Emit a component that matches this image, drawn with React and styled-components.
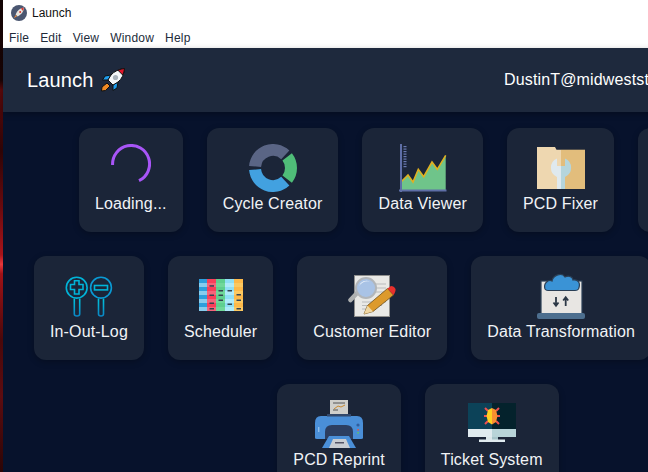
import styled, { createGlobalStyle } from 'styled-components'

const GlobalStyle = createGlobalStyle`
    html, body {
        margin: 0;
        padding: 0;
        width: 648px;
        height: 472px;
        overflow: hidden;
        background: #07122c;
        font-family: "Liberation Sans", Arial, sans-serif;
    }
`

const Screen = styled.div`
    display: flex;
    width: 648px;
    height: 472px;
    overflow: hidden;
`

const DesktopStrip = styled.div`
    flex: 0 0 3px;
    background: linear-gradient(
        180deg,
        #120304 0%,
        #1a0405 17%,
        #5c090c 19%,
        #2e0406 32%,
        #6a0a0e 44%,
        #a8141a 54%,
        #e8383c 56%,
        #a01217 58%,
        #4a080a 72%,
        #5c0c10 84%,
        #2c0506 100%
    );
`

const Window = styled.div`
    flex: 0 0 830px;
    display: flex;
    flex-direction: column;
    height: 472px;
`

const TitleBar = styled.div`
    height: 30px;
    background: #fff;
    display: flex;
    align-items: center;
    gap: 5px;
    padding: 0 0 4px 8px;
    box-sizing: border-box;
    font-size: 12px;
    color: #111;
`

const MenuBar = styled.div`
    height: 18px;
    background: #fff;
    display: flex;
    gap: 11px;
    padding-left: 6px;
    font-size: 12px;
    line-height: 16px;
    letter-spacing: 0.2px;
    color: #222b3a;
`

const Header = styled.header`
    height: 64px;
    flex-shrink: 0;
    background: #1e293d;
    display: flex;
    align-items: center;
    justify-content: space-between;
    padding: 0 24px;
    box-shadow: 0 2px 6px rgba(0, 0, 0, 0.3);
    position: relative;
    color: #fff;
`

const Brand = styled.h1`
    margin: 0;
    display: flex;
    align-items: center;
    gap: 7px;
    font-size: 20px;
    font-weight: 400;
    letter-spacing: 0.15px;
`

const UserName = styled.div`
    width: 305px;
    font-size: 16px;
    letter-spacing: 0.15px;
    white-space: nowrap;
`

const AppGrid = styled.main`
    flex: 1;
    background: #07122c;
    display: flex;
    flex-wrap: wrap;
    justify-content: center;
    align-content: flex-start;
    gap: 24px;
    padding: 16px 24px 0;
    overflow: hidden;
`

const Card = styled.div`
    box-sizing: border-box;
    height: 104px;
    width: ${props => props.$width || 'auto'};
    padding: 16px;
    background: #1b2538;
    border-radius: 12px;
    box-shadow: 0 2px 6px rgba(0, 0, 0, 0.25);
    display: flex;
    flex-direction: column;
    align-items: center;
`

const IconBox = styled.div`
    height: 48px;
    display: flex;
    justify-content: center;
    align-items: flex-start;
`

const Label = styled.div`
    font-size: 16px;
    line-height: 24px;
    letter-spacing: 0.15px;
    color: #f1f3f6;
    white-space: nowrap;
`

function RocketIcon() {
    return (
        <svg width="24" height="24" viewBox="0 0 24 24" stroke="#111" strokeWidth="1">
            <path d="M6 15 L1 19 L0.5 23 L4.5 22.5 L9 18 Z" fill="#f08a24" />
            <path d="M10 7 L4 8 L1.5 12 L7 12 Z" fill="#1e9bea" />
            <path d="M17 14 L16 20 L12 22.5 L12 17 Z" fill="#1e9bea" />
            <path d="M23.5 0.5 C18 1 13 3.5 10 7 L7 12 L12 17 L17 14 C21 11 23 6 23.5 0.5 Z" fill="#f4f6f8" />
            <path d="M23.5 0.5 C21 0.7 19 1.3 17 2.3 L21.7 7 C22.7 5 23.3 3 23.5 0.5 Z" fill="#e0162b" />
            <circle cx="14.5" cy="9.5" r="2.6" fill="#a9b2bb" stroke="none" />
        </svg>
    )
}

function AppLogo() {
    return (
        <svg width="16" height="16" viewBox="0 0 16 16">
            <circle cx="8" cy="8" r="8" fill="#4a5670" />
            <path d="M12.8 2.6 C9 3.2 6.2 5.8 4.6 9.4 L6.6 11.4 C10.2 9.8 12.8 7 12.8 2.6 Z" fill="#e9e4dc" />
            <path d="M12.8 2.6 L9.8 3.6 L12 6 Z" fill="#d8352f" />
            <path d="M4.8 10 L2.8 13.2 L6 11.2 Z" fill="#ef8a3a" />
            <circle cx="9.2" cy="7" r="1" fill="#d8352f" />
        </svg>
    )
}

function SpinnerIcon() {
    return (
        <svg width="40" height="40" viewBox="0 0 40 40">
            <path d="M1.6 21 A18.5 18.5 0 1 1 28 36.7" fill="none" stroke="#a855f7" strokeWidth="3" />
        </svg>
    )
}

function CycleIcon() {
    return (
        <svg width="48" height="48" viewBox="0 0 48 48" fill="none" strokeWidth="12">
            <path d="M6.07 22.43 A18 18 0 0 1 36.28 10.84" stroke="#5a6585" />
            <path d="M38.18 12.92 A18 18 0 0 1 38.18 35.08" stroke="#4fbd78" />
            <path d="M36.28 37.16 A18 18 0 0 1 6.07 25.57" stroke="#42a1e0" />
        </svg>
    )
}

function ChartIcon() {
    const ticks = [2, 4.5, 7, 9.5, 12, 14.5, 17, 19.5, 22]
    return (
        <svg width="48" height="48" viewBox="0 0 48 48">
            <path d="M2 37.3 L9 31 L14 38 L19.3 25.3 L24.7 32.7 L33 18 L38.3 25.3 L46.7 11.3 L46.7 46 L2 46 Z" fill="#6fc48a" />
            <path d="M2 38 L9 31 L14 38 L19.3 25.3 L24.7 32.7 L33 18 L38.3 25.3 L46.7 11.3" fill="none" stroke="#e0b020" strokeWidth="1.6" />
            <rect x="1" y="0" width="2" height="48" fill="#5e6ea6" />
            <rect x="0" y="45.5" width="47.5" height="2" fill="#5e6ea6" />
            {ticks.map(y => (
                <rect key={y} x="4.5" y={y} width="3" height="1.2" fill="#6a7ab0" />
            ))}
        </svg>
    )
}

function FolderIcon() {
    return (
        <svg width="48" height="48" viewBox="0 0 48 48">
            <path d="M0 3 L18 3 L19.5 5.7 L24 5.7 L24 45 L0 45 Z" fill="#eed7b0" />
            <rect x="24" y="5.7" width="24" height="39.3" fill="#e2bd7c" />
            <path d="M20 14.6 L20 22 L24 22 L24 45 L20 45 L20 33 A10 10 0 0 1 20 14.6 Z" fill="#dfe9ee" />
            <path d="M28 14.6 L28 22 L24 22 L24 45 L28 45 L28 33 A10 10 0 0 0 28 14.6 Z" fill="#b5d5dc" />
        </svg>
    )
}

function InOutIcon() {
    return (
        <svg width="48" height="48" viewBox="0 0 48 48" fill="none" strokeWidth="1.6">
            <defs>
                <linearGradient id="logGrad" x1="0" y1="0" x2="0" y2="1">
                    <stop offset="0" stopColor="#00c4dc" />
                    <stop offset="1" stopColor="#0a86c4" />
                </linearGradient>
            </defs>
            <g stroke="#00b4d8">
                <circle cx="11.7" cy="15.7" r="10.4" />
                <circle cx="36" cy="15.7" r="10.4" stroke="#0a9ad4" />
                <path d="M9.5 12.5 L9.5 8.7 L14 8.7 L14 12.5 L18 12.5 L18 17.5 L14 17.5 L14 22 L9.5 22 L9.5 17.5 L5.5 17.5 L5.5 12.5 Z" />
                <rect x="29.5" y="13.5" width="13" height="4.4" />
            </g>
            <g stroke="url(#logGrad)">
                <path d="M9.3 26.5 L9.3 42 Q9.3 44 12 44 Q14.7 44 14.7 42 L14.7 26.5" />
                <path d="M33.5 26.5 L33.5 42 Q33.5 44 36 44 Q38.5 44 38.5 42 L38.5 26.5" />
            </g>
        </svg>
    )
}

const scheduleColumns = [
    { light: '#2f9fdc', dark: '#87cdee', dashes: [] },
    { light: '#f8405a', dark: '#f6647a', dashes: [6.2, 15.5, 23.5, 29] },
    { light: '#5fcf8f', dark: '#70d89a', dashes: [11, 15.5, 20.5] },
    { light: '#8fdff5', dark: '#aeeafa', dashes: [11, 24.5] },
    { light: '#fdb94a', dark: '#fcc860', dashes: [15, 20.5, 29] },
]
const scheduleRows = [0, 1, 2, 3, 4, 5, 6, 7]

function ScheduleIcon() {
    return (
        <svg width="48" height="48" viewBox="0 0 48 48">
            <g transform="translate(2 7)">
                {scheduleColumns.map((col, c) => (
                    <g key={c}>
                        {scheduleRows.map(r => (
                            <rect key={r} x={c === 0 ? 0 : 8 + (c - 1) * 9} y={r * 4} width={c === 0 ? 8 : 9} height="4" fill={r % 2 ? col.dark : col.light} />
                        ))}
                        {col.dashes.map(y => (
                            <rect key={y} x={c === 0 ? 1 : 10.5 + (c - 1) * 9} y={y} width="4.5" height="1.5" fill="#35424f" />
                        ))}
                    </g>
                ))}
            </g>
        </svg>
    )
}

function EditorIcon() {
    return (
        <svg width="48" height="48" viewBox="0 0 48 48">
            <rect x="6.5" y="3.5" width="35" height="41" fill="#e9e9e6" stroke="#8f8f8d" />
            <path d="M24 12 H38 M26 16 H38 M26 20 H38 M14 30 H38 M14 33.5 H34 M14 37 H28" stroke="#b9bbbc" strokeWidth="1.2" />
            <path d="M10 20 L2.5 28" stroke="#aeb0b0" strokeWidth="4.5" strokeLinecap="round" />
            <circle cx="18" cy="16" r="10" fill="#a9c3e6" stroke="#b2b6ba" strokeWidth="2" />
            <path d="M11 14 A8 8 0 0 1 22 9.5 A11 11 0 0 0 11 14 Z" fill="#eef4fb" />
            <path d="M16 42 L19.5 33.5 L39.5 16.5 L45.5 23 L25 39.5 Z" fill="#dd9a2c" stroke="#6e4f1a" strokeWidth="0.8" />
            <path d="M16 42 L19.5 33.5 L25 39.5 Z" fill="#efd7a4" />
            <path d="M39.5 16.5 L43 14 Q46 14 47.5 17 Q48 19 45.5 23 Z" fill="#e8302c" />
        </svg>
    )
}

function CloudIcon() {
    return (
        <svg width="48" height="48" viewBox="0 0 48 48">
            <rect x="4" y="9" width="41" height="33" fill="#e8e6e3" stroke="#2b3f55" strokeWidth="1.2" />
            <rect x="0" y="41" width="48" height="6" rx="2" fill="#4d6f8f" />
            <path d="M8 17 C6 11 12 7 15 9 C16 3 25 0 28 5 C32 3 36 5 36 8 C41 7 44 11 41.5 17 Q40.5 18.5 38 18.5 L11 18.5 Q9 18.5 8 17 Z" fill="#3a93d6" stroke="#2b3f55" strokeWidth="1.2" />
            <path d="M19 25 V33 M16.5 30.5 L19 33.8 L21.5 30.5 M28.7 34 V26 M26.2 28.5 L28.7 25.2 L31.2 28.5" fill="none" stroke="#2c3846" strokeWidth="1.8" />
        </svg>
    )
}

function PrinterIcon() {
    return (
        <svg width="48" height="48" viewBox="0 0 48 48">
            <rect x="15" y="0" width="18" height="14" fill="#cfcfcb" />
            <path d="M18 3 H30 M18 10 H23" stroke="#555" strokeWidth="1" />
            <path d="M19 9 L23 6 L26 7 L30 5" stroke="#c98a30" strokeWidth="1" fill="none" />
            <path d="M0 23 Q0 16 6 16 L42 16 Q48 16 48 23 L48 38 Q48 39 46 39 L2 39 Q0 39 0 38 Z" fill="#4a8fd8" />
            <rect x="12" y="14" width="24" height="2.5" fill="#33496b" />
            <path d="M10 39 L10 32 Q10 25 17 25 L31 25 Q38 25 38 32 L38 39 Z" fill="#2c3e60" />
            <path d="M7 48 L14 36 L34 36 L41 48 Z" fill="#4a8fd8" />
            <path d="M14 48 L18 39 L31 39 L35 48 Z" fill="#c9cdd2" />
            <rect x="20" y="42" width="9" height="1.5" fill="#556" />
            <circle cx="43" cy="25" r="1.6" fill="#2f5f9f" />
            <rect x="42.3" y="29" width="1.6" height="1.6" fill="#e2574c" />
            <rect x="42.3" y="32" width="1.6" height="1.6" fill="#5ec26a" />
            <rect x="3" y="27" width="1.4" height="5" fill="#8fbdea" />
        </svg>
    )
}

function TicketIcon() {
    return (
        <svg width="48" height="48" viewBox="0 0 48 48">
            <rect x="0" y="3" width="24" height="26" fill="#0c4258" />
            <rect x="24" y="3" width="24" height="26" fill="#04222c" />
            <rect x="0" y="29" width="24" height="8" fill="#e0ebef" />
            <rect x="24" y="29" width="24" height="8" fill="#b8d4d8" />
            <rect x="18" y="37" width="6" height="3" fill="#dbe7ea" />
            <rect x="24" y="37" width="6" height="3" fill="#a6c4c9" />
            <rect x="11" y="39.5" width="26" height="2.5" fill="#e0ebef" />
            <path d="M17 8 L20 11 M31 8 L28 11 M16 16 H19 M32 16 H29 M17 24 L20 21 M31 24 L28 21" stroke="#f05050" strokeWidth="2" />
            <path d="M24 8 L20 10 L18.5 16 L20 22 L24 24.5 Z" fill="#fdd020" />
            <path d="M24 8 L28 10 L29.5 16 L28 22 L24 24.5 Z" fill="#f89030" />
        </svg>
    )
}

const menuItems = ['File', 'Edit', 'View', 'Window', 'Help']

const apps = [
    { name: 'Loading...', icon: <SpinnerIcon /> },
    { name: 'Cycle Creator', icon: <CycleIcon /> },
    { name: 'Data Viewer', icon: <ChartIcon /> },
    { name: 'PCD Fixer', icon: <FolderIcon /> },
    { width: '119px' },
    { name: 'In-Out-Log', icon: <InOutIcon /> },
    { name: 'Scheduler', icon: <ScheduleIcon /> },
    { name: 'Customer Editor', icon: <EditorIcon /> },
    { name: 'Data Transformation', icon: <CloudIcon /> },
    { width: '127px' },
    { name: 'PCD Reprint', icon: <PrinterIcon /> },
    { name: 'Ticket System', icon: <TicketIcon /> },
]

function App() {
    return (
        <>
            <GlobalStyle />
            <Screen>
                <DesktopStrip />
                <Window>
                    <TitleBar>
                        <AppLogo />
                        <span>Launch</span>
                    </TitleBar>
                    <MenuBar>
                        {menuItems.map(item => (
                            <span key={item}>{item}</span>
                        ))}
                    </MenuBar>
                    <Header>
                        <Brand>
                            Launch
                            <RocketIcon />
                        </Brand>
                        <UserName>DustinT@midwestst</UserName>
                    </Header>
                    <AppGrid>
                        {apps.map((app, index) => (
                            <Card key={index} $width={app.width}>
                                <IconBox>{app.icon}</IconBox>
                                <Label>{app.name}</Label>
                            </Card>
                        ))}
                    </AppGrid>
                </Window>
            </Screen>
        </>
    )
}

export default App
